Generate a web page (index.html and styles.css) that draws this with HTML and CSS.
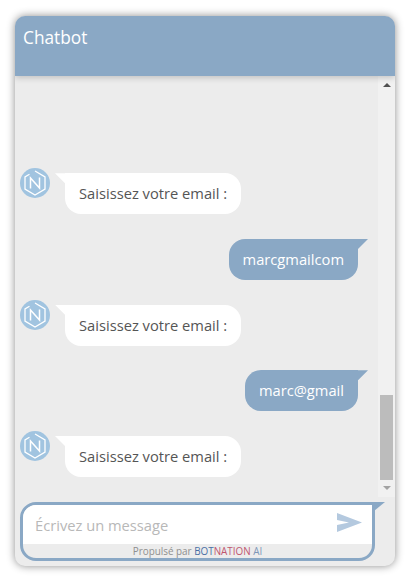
FILE: index.html
```
<!DOCTYPE html>
<html lang="fr">
<head>
<meta charset="utf-8">
<title>Chatbot</title>
<link rel="stylesheet" href="styles.css">
</head>
<body>
<main class="widget">
  <header class="head">Chatbot</header>
  <section class="middle">
    <div class="messages">
      <div class="row bot">
        <svg class="avatar" viewBox="0 0 30 30"><circle cx="15" cy="15" r="15" fill="#a1c4e0"/><path d="M15 3 25 8.9V21.1L15 27 5 21.1V8.9L9.5 6.3" fill="none" stroke="#fff" stroke-width="1.3"/><path d="M10.5 20.5V10L19.5 20V9.5" fill="none" stroke="#fff" stroke-width="1.5"/></svg>
        <div class="bubble in">Saisissez votre email :</div>
      </div>
      <div class="row me"><div class="bubble out">marcgmailcom</div></div>
      <div class="row bot">
        <svg class="avatar" viewBox="0 0 30 30"><circle cx="15" cy="15" r="15" fill="#a1c4e0"/><path d="M15 3 25 8.9V21.1L15 27 5 21.1V8.9L9.5 6.3" fill="none" stroke="#fff" stroke-width="1.3"/><path d="M10.5 20.5V10L19.5 20V9.5" fill="none" stroke="#fff" stroke-width="1.5"/></svg>
        <div class="bubble in">Saisissez votre email :</div>
      </div>
      <div class="row me"><div class="bubble out">marc@gmail</div></div>
      <div class="row bot">
        <svg class="avatar" viewBox="0 0 30 30"><circle cx="15" cy="15" r="15" fill="#a1c4e0"/><path d="M15 3 25 8.9V21.1L15 27 5 21.1V8.9L9.5 6.3" fill="none" stroke="#fff" stroke-width="1.3"/><path d="M10.5 20.5V10L19.5 20V9.5" fill="none" stroke="#fff" stroke-width="1.5"/></svg>
        <div class="bubble in">Saisissez votre email :</div>
      </div>
    </div>
    <div class="scrollbar">
      <span class="arrow up"></span>
      <span class="thumb"></span>
      <span class="arrow down"></span>
    </div>
  </section>
  <footer class="composer">
    <div class="box">
      <div class="field">
        <span class="placeholder">Écrivez un message</span>
        <svg class="send" viewBox="0 0 25 19"><path d="M0 0 25 9.5 0 19V12L12 9.5 0 7Z" fill="#b4c9df"/></svg>
      </div>
      <div class="credit">Propulsé par <span class="c1">BOT</span><span class="c2">NATION</span> <span class="c3">AI</span></div>
    </div>
  </footer>
</main>
</body>
</html>
```
FILE: styles.css
```
* { box-sizing: border-box; }
html, body { margin: 0; height: 100%; background: #fff; }
body { padding: 16px 17px 12px 15px; font-family: "Open Sans", sans-serif; }

.widget {
  height: 550px;
  display: flex;
  flex-direction: column;
  background: #ececec;
  border-radius: 10px;
  box-shadow: 0 0 9px rgba(0, 0, 0, .45);
  overflow: hidden;
}

.head {
  height: 60px;
  flex: none;
  padding: 10px 8px;
  background: #8aa8c5;
  color: #fff;
  font-size: 17.3px;
  line-height: 24px;
  position: relative;
  box-shadow: 0 2px 6px rgba(0, 0, 0, .18);
}

.middle { flex: 1; min-height: 0; display: flex; }

.messages {
  flex: 1;
  display: flex;
  flex-direction: column;
  justify-content: flex-end;
  gap: 24.7px;
  padding: 0 20px 20px 5px;
}

.row { display: flex; align-items: flex-start; }
.row.me { justify-content: flex-end; }

.avatar { width: 30px; height: 30px; margin-top: -5px; margin-right: 15px; flex: none; }

.bubble {
  position: relative;
  height: 41px;
  padding: 0 14px;
  font-size: 14.7px;
  line-height: 41px;
  white-space: nowrap;
}
.bubble::before {
  content: "";
  position: absolute;
  top: 0;
  width: 10px;
  height: 10px;
}
.bubble.in { background: #fff; color: #555; border-radius: 0 16px 16px 16px; }
.bubble.in::before { left: -10px; background: #fff; clip-path: polygon(0 0, 100% 0, 100% 100%); }
.bubble.out { background: #8aa8c5; color: #fff; border-radius: 16px 0 16px 16px; }
.bubble.out::before { right: -10px; background: #8aa8c5; clip-path: polygon(0 0, 100% 0, 0 100%); }

.scrollbar {
  width: 17px;
  flex: none;
  background: #f1f1f1;
  display: flex;
  flex-direction: column;
  align-items: center;
  padding: 7px 0;
}
.arrow { width: 0; height: 0; border-left: 4px solid transparent; border-right: 4px solid transparent; flex: none; }
.arrow.up { border-bottom: 4px solid #505050; }
.arrow.down { border-top: 4px solid #a3a3a3; margin-top: 6px; }
.thumb { width: 13px; height: 85px; background: #bcbcbc; margin-top: auto; flex: none; }

.composer { flex: none; height: 69px; padding: 5px 20px 5px 5px; }

.box {
  position: relative;
  height: 59px;
  border: 3px solid #8aa8c5;
  border-radius: 16px 0 16px 16px;
  overflow: visible;
  display: flex;
  flex-direction: column;
}
.box::after {
  content: "";
  position: absolute;
  top: -3px;
  right: -13px;
  width: 11px;
  height: 9px;
  background: #8aa8c5;
  clip-path: polygon(0 0, 100% 0, 0 100%);
}

.field {
  flex: none;
  height: 39px;
  background: #fff;
  border-radius: 13px 0 0 0;
  display: flex;
  align-items: center;
  justify-content: space-between;
  padding: 1px 10px 0 12px;
}
.placeholder { font-size: 14.7px; color: #b8b8b8; }
.send { width: 25px; height: 19px; flex: none; margin-top: -5px; }

.credit {
  flex: 1;
  text-align: center;
  font-size: 9.9px;
  line-height: 14px;
  color: #8f8f8f;
}
.c1 { color: #4a6fa5; }
.c2 { color: #c0566f; }
.c3 { color: #7f97b8; }
```
